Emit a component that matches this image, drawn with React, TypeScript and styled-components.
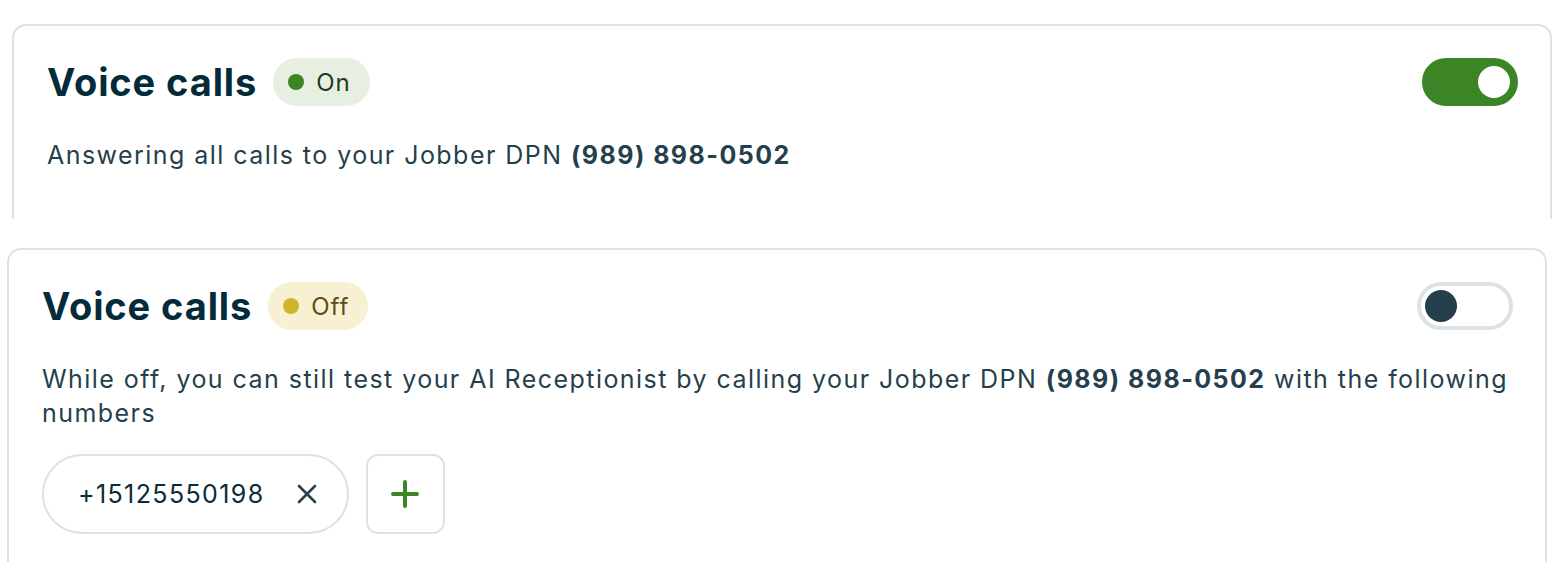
import React from "react";
import styled, { createGlobalStyle } from "styled-components";

const GlobalStyle = createGlobalStyle`
  html, body {
    margin: 0;
    padding: 0;
    background: #ffffff;
  }
  body {
    font-family: Inter, "Noto Sans", "Liberation Sans", sans-serif;
    -webkit-font-smoothing: antialiased;
  }
  button {
    font-family: inherit;
  }
`;

// ====== Layout ======
const Page = styled.div`
  width: 1568px;
  height: 562px;
  overflow: hidden;
  display: flex;
  flex-direction: column;
`;

// each screenshot slice is clipped at the bottom
const Frame = styled.div<{ $height: number; $top: number; $left: number }>`
  height: ${({ $height }) => $height}px;
  padding-top: ${({ $top }) => $top}px;
  padding-left: ${({ $left }) => $left}px;
  box-sizing: border-box;
  overflow: hidden;
  flex-shrink: 0;
`;

const Card = styled.section`
  width: 1540px;
  min-height: 400px;
  box-sizing: border-box;
  border: 2px solid #dde2e6;
  border-radius: 14px;
  padding: 32px 32px 40px 33px;
  background: #fff;
`;

const HeaderRow = styled.div`
  display: flex;
  align-items: center;
  height: 48px;
`;

const Title = styled.h2`
  margin: 0;
  font-size: 38px;
  font-weight: 700;
  letter-spacing: 0.9px;
  color: #032b3a;
  line-height: 48px;
`;

const Badge = styled.span<{ $tone: "on" | "off" }>`
  display: inline-flex;
  align-items: center;
  gap: 12px;
  height: 48px;
  box-sizing: border-box;
  padding: 0 19px 0 15px;
  margin-left: 16px;
  border-radius: 24px;
  font-size: 24px;
  letter-spacing: 1px;
  background: ${({ $tone }) => ($tone === "on" ? "#e6efe1" : "#f7f0d2")};
  color: ${({ $tone }) => ($tone === "on" ? "#1d3c14" : "#5c4e12")};
`;

const Dot = styled.span<{ $tone: "on" | "off" }>`
  width: 16px;
  height: 16px;
  border-radius: 50%;
  background: ${({ $tone }) => ($tone === "on" ? "#3b8526" : "#cfb42c")};
`;

const Toggle = styled.button<{ $on: boolean }>`
  margin-left: auto;
  width: 96px;
  height: 48px;
  box-sizing: border-box;
  border-radius: 24px;
  padding: 0 4px;
  display: flex;
  align-items: center;
  justify-content: ${({ $on }) => ($on ? "flex-end" : "flex-start")};
  cursor: pointer;
  border: 4px solid ${({ $on }) => ($on ? "#3b8526" : "#dde2e6")};
  background: ${({ $on }) => ($on ? "#3b8526" : "#ffffff")};
`;

const Knob = styled.span<{ $on: boolean }>`
  width: 32px;
  height: 32px;
  border-radius: 50%;
  background: ${({ $on }) => ($on ? "#ffffff" : "#243e4c")};
`;

const Description = styled.p`
  margin: 32px 0 0;
  font-size: 25px;
  letter-spacing: 1.45px;
  line-height: 34px;
  color: #263f4d;

  strong {
    font-weight: 700;
  }
`;

const NumberRow = styled.div`
  display: flex;
  align-items: center;
  gap: 17px;
  margin-top: 24px;
`;

const Chip = styled.div`
  display: flex;
  align-items: center;
  gap: 31px;
  height: 80px;
  box-sizing: border-box;
  padding: 0 29px 0 34px;
  border: 2px solid #dde2e6;
  border-radius: 40px;
  font-size: 25px;
  letter-spacing: 1.4px;
  color: #0c2a3a;
`;

const IconButton = styled.button`
  display: flex;
  align-items: center;
  justify-content: center;
  padding: 0;
  border: none;
  background: none;
  cursor: pointer;
`;

const AddButton = styled.button`
  width: 79px;
  height: 80px;
  box-sizing: border-box;
  border: 2px solid #dde2e6;
  border-radius: 12px;
  background: #fff;
  display: flex;
  align-items: center;
  justify-content: center;
  cursor: pointer;
`;

const CloseIcon = () => (
  <svg width="22" height="22" viewBox="0 0 22 22" fill="none">
    <path d="M3 3L19 19M19 3L3 19" stroke="#2a3f4b" strokeWidth="2.6" strokeLinecap="round" />
  </svg>
);

const PlusIcon = () => (
  <svg width="30" height="30" viewBox="0 0 30 30" fill="none">
    <path d="M15 3V27M3 15H27" stroke="#3b8526" strokeWidth="4" strokeLinecap="round" />
  </svg>
);

const App: React.FC = () => {
  return (
    <>
      <GlobalStyle />
      <Page>
        <Frame $height={219} $top={24} $left={12}>
          <Card>
            <HeaderRow>
              <Title>Voice calls</Title>
              <Badge $tone="on">
                <Dot $tone="on" />
                On
              </Badge>
              <Toggle $on aria-label="Voice calls on">
                <Knob $on />
              </Toggle>
            </HeaderRow>
            <Description>
              Answering all calls to your Jobber DPN <strong>(989) 898-0502</strong>
            </Description>
          </Card>
        </Frame>
        <Frame $height={343} $top={29} $left={7}>
          <Card>
            <HeaderRow>
              <Title>Voice calls</Title>
              <Badge $tone="off">
                <Dot $tone="off" />
                Off
              </Badge>
              <Toggle $on={false} aria-label="Voice calls off">
                <Knob $on={false} />
              </Toggle>
            </HeaderRow>
            <Description>
              While off, you can still test your AI Receptionist by calling your Jobber DPN{" "}
              <strong>(989) 898-0502</strong> with the following numbers
            </Description>
            <NumberRow>
              <Chip>
                +15125550198
                <IconButton aria-label="Remove number">
                  <CloseIcon />
                </IconButton>
              </Chip>
              <AddButton aria-label="Add number">
                <PlusIcon />
              </AddButton>
            </NumberRow>
          </Card>
        </Frame>
      </Page>
    </>
  );
};

export default App;
